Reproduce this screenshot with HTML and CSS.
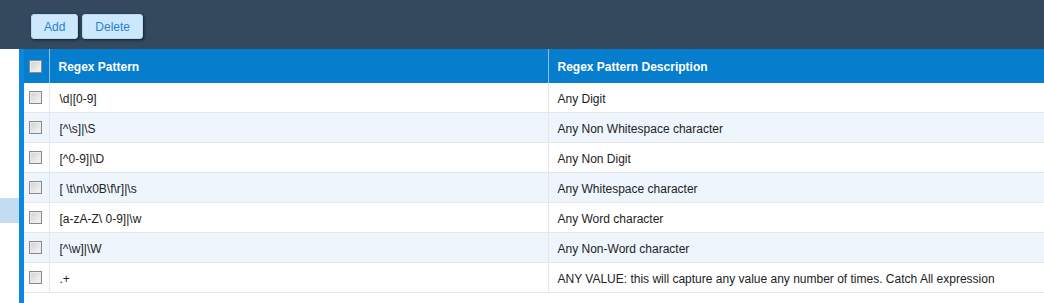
FILE: index.html
```html
<!DOCTYPE html>
<html lang="en">

<head>
   <meta charset="UTF-8">
   <meta name="viewport" content="width=device-width, initial-scale=1.0">
   <title>Regex Patterns</title>
   <link rel="stylesheet" href="styles.css">
</head>

<body>

   <header class="toolbar">
       <button type="button" class="tool-button">Add</button>
       <button type="button" class="tool-button">Delete</button>
   </header>

   <div class="main">
       <nav class="side">
           <div class="side-item"></div>
       </nav>

       <div class="content">
           <table class="grid">
               <thead>
                   <tr>
                       <th class="check-col"><span class="check"></span></th>
                       <th class="pattern-col">Regex Pattern</th>
                       <th>Regex Pattern Description</th>
                   </tr>
               </thead>
               <tbody>
                   <tr>
                       <td class="check-col"><span class="check"></span></td>
                       <td>\d|[0-9]</td>
                       <td>Any Digit</td>
                   </tr>
                   <tr>
                       <td class="check-col"><span class="check"></span></td>
                       <td>[^\s]|\S</td>
                       <td>Any Non Whitespace character</td>
                   </tr>
                   <tr>
                       <td class="check-col"><span class="check"></span></td>
                       <td>[^0-9]|\D</td>
                       <td>Any Non Digit</td>
                   </tr>
                   <tr>
                       <td class="check-col"><span class="check"></span></td>
                       <td>[ \t\n\x0B\f\r]|\s</td>
                       <td>Any Whitespace character</td>
                   </tr>
                   <tr>
                       <td class="check-col"><span class="check"></span></td>
                       <td>[a-zA-Z\ 0-9]|\w</td>
                       <td>Any Word character</td>
                   </tr>
                   <tr>
                       <td class="check-col"><span class="check"></span></td>
                       <td>[^\w]|\W</td>
                       <td>Any Non-Word character</td>
                   </tr>
                   <tr>
                       <td class="check-col"><span class="check"></span></td>
                       <td>.+</td>
                       <td>ANY VALUE: this will capture any value any number of times. Catch All expression</td>
                   </tr>
               </tbody>
           </table>
       </div>
   </div>

</body>

</html>
```

FILE: styles.css
```css
body {
    font-family: "Liberation Sans", Arial, sans-serif;
    font-size: 12px;
    margin: 0;
    color: #222;
    background-color: white;
}

.toolbar {
    height: 49px;
    box-sizing: border-box;
    padding: 14px 0 0 31px;
    background-color: #34495e;
    display: flex;
    align-items: flex-start;
    gap: 4px;
}

.tool-button {
    font-family: inherit;
    font-size: 12px;
    color: #2b7fd3;
    background-color: #cde8fc;
    border: 1px solid #b6d8f2;
    border-radius: 3px;
    height: 25px;
    padding: 0 12px;
    box-shadow: 1px 1px 3px rgba(0, 0, 0, 0.6);
    cursor: pointer;
}

.main {
    display: flex;
    height: 254px;
}

.side {
    width: 19px;
    flex-shrink: 0;
    padding-top: 149px;
}

.side-item {
    height: 25px;
    background-color: #c2dcf0;
}

.content {
    flex-grow: 1;
    min-width: 0;
    border-left: 5px solid #0b87df;
}

.grid {
    width: 100%;
    border-collapse: collapse;
    table-layout: fixed;
}

.grid th {
    background-color: #067dcd;
    color: white;
    font-weight: bold;
    text-align: left;
    height: 33px;
    padding: 1px 0 0 9px;
    border-left: 1px solid #8cc0e8;
}

.grid td {
    height: 27px;
    padding: 2px 0 0 10px;
    border-bottom: 1px solid #e6e6e6;
    border-left: 1px solid #e6e6e6;
    white-space: nowrap;
}

.grid td + td + td {
    padding-left: 9px;
}

.grid tbody tr:nth-child(even) td {
    background-color: #eef5fc;
}

.grid .check-col {
    width: 25px;
    padding: 0 0 0 5px;
    box-sizing: border-box;
    border-left: none;
}

.grid .pattern-col {
    width: 489px;
}

.check {
    display: block;
    width: 11px;
    height: 11px;
    border: 1px solid #8a8a8a;
    background: linear-gradient(135deg, #d0d0d0, #f8f8f8);
    box-shadow: inset 0 0 0 1px #ececec;
}
```
